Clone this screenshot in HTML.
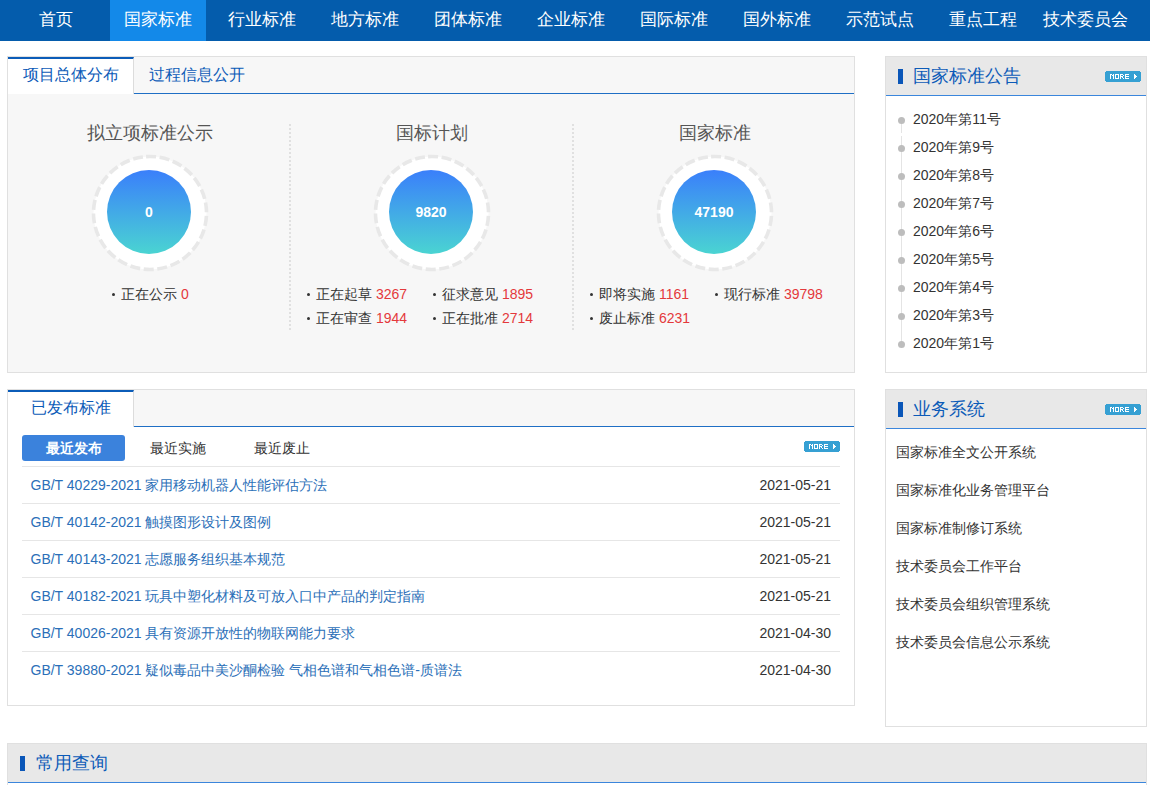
<!DOCTYPE html>
<html><head><meta charset="utf-8">
<style>
*{margin:0;padding:0;box-sizing:border-box}
html,body{width:1150px;height:785px;overflow:hidden;background:#fff;font-family:"Liberation Sans",sans-serif;color:#333}
.abs{position:absolute}
#nav{position:absolute;left:0;top:0;width:1150px;height:41px;background:#045cac}
#nav .it{position:absolute;top:0;height:41px;line-height:39px;width:103px;text-align:center;color:#fff;font-size:16.5px;white-space:nowrap}
#nav .on{background:#1389e9}
.panel{position:absolute;border:1px solid #e0e0e0}
.tabbar{position:absolute;left:0;top:0;right:0;height:37px;background:#f7f7f7;border-bottom:1px solid #1f6fc5}
.tab{position:absolute;top:0;height:37px;font-size:16px;color:#0c5bb8;text-align:center;line-height:36px}
.tab.on{background:#fff;border-top:2px solid #0b5cb8;border-right:1px solid #dcdcdc;height:37px;line-height:32px}
.col{position:absolute;top:66px;width:283px;height:208px}
.vdot{position:absolute;top:67px;width:2px;height:206px;background:repeating-linear-gradient(#e0e0e0 0 2px,transparent 2px 4px)}
.ctitle{position:absolute;top:-2px;left:0;width:100%;text-align:center;font-size:18px;color:#555}
.ring{position:absolute}
.ball{position:absolute;width:84px;height:84px;border-radius:50%;background:linear-gradient(#3a7ffb,#4ad4d2);color:#fff;font-weight:bold;font-size:14px;text-align:center;line-height:84px}
.st{position:absolute;font-size:14px;color:#333;white-space:nowrap;line-height:20px}
.st b{font-weight:normal;color:#e4393c}
.st i{display:inline-block;width:3px;height:3px;border-radius:50%;background:#333;vertical-align:middle;margin:0 6px 0 1px;position:relative;top:-1px}
.hdr{position:absolute;left:0;top:0;right:0;background:#e8e8e8;border-bottom:1px solid #3b86dc}
.mark{position:absolute;width:5px;height:15px;background:#0a56b8}
.htitle{position:absolute;font-size:18px;color:#0c5bb8;white-space:nowrap;line-height:24px}
.more{position:absolute;width:36px;height:11px}
.txt{position:absolute;font-size:14px;white-space:nowrap;line-height:20px}
.sep{position:absolute;left:14px;width:818px;height:1px;background:#e6e6e6}
.lnk{color:#2b6fb8}
.btn{position:absolute;width:103px;height:26px;background:#3b82dc;border-radius:3px;color:#fff;font-weight:bold;font-size:14px;text-align:center;line-height:26px}
.dot{position:absolute;width:7px;height:7px;border-radius:50%;background:#bdbdbd}
.vline{position:absolute;width:1px;background:#e4e4e4}
</style></head><body>
<div id="nav">
<div class="it" style="left:4px">首页</div>
<div class="it on" style="left:110px;width:96px">国家标准</div>
<div class="it" style="left:210px">行业标准</div>
<div class="it" style="left:313px">地方标准</div>
<div class="it" style="left:416px">团体标准</div>
<div class="it" style="left:519px">企业标准</div>
<div class="it" style="left:622px">国际标准</div>
<div class="it" style="left:725px">国外标准</div>
<div class="it" style="left:828px">示范试点</div>
<div class="it" style="left:931px">重点工程</div>
<div class="it" style="left:1034px">技术委员会</div>
</div>

<!-- panel 1 -->
<div class="panel" style="left:7px;top:56px;width:848px;height:317px;background:#f7f7f7">
 <div class="tabbar"></div>
 <div class="tab on" style="left:0;width:126px">项目总体分布</div>
 <div class="tab" style="left:126px;width:126px">过程信息公开</div>

 <div class="col" style="left:0">
  <div class="ctitle">拟立项标准公示</div>
 </div>
 <div class="vdot" style="left:281px"></div><div class="col" style="left:282px">
  <div class="ctitle">国标计划</div>
 </div>
 <div class="vdot" style="left:564px"></div><div class="col" style="left:565px">
  <div class="ctitle">国家标准</div>
 </div>
 <svg class="ring" style="left:81.5px;top:95.5px" width="120" height="120"><circle cx="60" cy="60" r="56.5" fill="#fff" stroke="#e8e8e8" stroke-width="3.6" stroke-dasharray="10 3.65" transform="rotate(-94 60 60)"/></svg><div class="ball" style="left:99px;top:113px">0</div>
 <svg class="ring" style="left:363.5px;top:95.5px" width="120" height="120"><circle cx="60" cy="60" r="56.5" fill="#fff" stroke="#e8e8e8" stroke-width="3.6" stroke-dasharray="10 3.65" transform="rotate(-94 60 60)"/></svg><div class="ball" style="left:381px;top:113px">9820</div>
 <svg class="ring" style="left:646.5px;top:95.5px" width="120" height="120"><circle cx="60" cy="60" r="56.5" fill="#fff" stroke="#e8e8e8" stroke-width="3.6" stroke-dasharray="10 3.65" transform="rotate(-94 60 60)"/></svg><div class="ball" style="left:664px;top:113px">47190</div>
 <div class="st" style="left:103px;top:227px"><i></i>正在公示 <b>0</b></div>
 <div class="st" style="left:298px;top:227px"><i></i>正在起草 <b>3267</b></div>
 <div class="st" style="left:424px;top:227px"><i></i>征求意见 <b>1895</b></div>
 <div class="st" style="left:298px;top:251px"><i></i>正在审查 <b>1944</b></div>
 <div class="st" style="left:424px;top:251px"><i></i>正在批准 <b>2714</b></div>
 <div class="st" style="left:581px;top:227px"><i></i>即将实施 <b>1161</b></div>
 <div class="st" style="left:706px;top:227px"><i></i>现行标准 <b>39798</b></div>
 <div class="st" style="left:581px;top:251px"><i></i>废止标准 <b>6231</b></div>
</div>

<div class="panel" style="left:7px;top:389px;width:848px;height:317px;background:#fff">
 <div class="tabbar"></div>
 <div class="tab on" style="left:0;width:126px">已发布标准</div>
 <div class="btn" style="left:14px;top:45px">最近发布</div>
 <div class="txt" style="left:142px;top:48px">最近实施</div>
 <div class="txt" style="left:246px;top:48px">最近废止</div>
 <div style="position:absolute;left:796px;top:51px"><svg class="more" width="36" height="11" viewBox="0 0 36 11" shape-rendering="crispEdges"><path fill="#36a0d3" d="M1 0h34v1h1v9h-1v1H1v-1H0V1h1z"/><path fill="#fff" d="M5 3h1v1h-1zM6 3h1v1h-1zM8 3h1v1h-1zM5 4h1v1h-1zM7 4h1v1h-1zM8 4h1v1h-1zM5 5h1v1h-1zM8 5h1v1h-1zM5 6h1v1h-1zM8 6h1v1h-1zM5 7h1v1h-1zM8 7h1v1h-1zM10 3h1v1h-1zM11 3h1v1h-1zM12 3h1v1h-1zM13 3h1v1h-1zM10 4h1v1h-1zM13 4h1v1h-1zM10 5h1v1h-1zM13 5h1v1h-1zM10 6h1v1h-1zM13 6h1v1h-1zM10 7h1v1h-1zM11 7h1v1h-1zM12 7h1v1h-1zM13 7h1v1h-1zM15 3h1v1h-1zM16 3h1v1h-1zM17 3h1v1h-1zM15 4h1v1h-1zM18 4h1v1h-1zM15 5h1v1h-1zM16 5h1v1h-1zM17 5h1v1h-1zM15 6h1v1h-1zM17 6h1v1h-1zM15 7h1v1h-1zM18 7h1v1h-1zM20 3h1v1h-1zM21 3h1v1h-1zM22 3h1v1h-1zM23 3h1v1h-1zM20 4h1v1h-1zM20 5h1v1h-1zM21 5h1v1h-1zM22 5h1v1h-1zM23 5h1v1h-1zM20 6h1v1h-1zM20 7h1v1h-1zM21 7h1v1h-1zM22 7h1v1h-1zM23 7h1v1h-1zM29 3h1v1h-1zM29 4h1v1h-1zM30 4h1v1h-1zM29 5h1v1h-1zM30 5h1v1h-1zM31 5h1v1h-1zM29 6h1v1h-1zM30 6h1v1h-1zM29 7h1v1h-1z"/></svg></div>
 <div class="sep" style="top:76px"></div>
 <div class="txt lnk" style="left:22.5px;top:85px">GB/T 40229-2021 家用移动机器人性能评估方法</div>
 <div class="txt" style="right:23px;top:85px">2021-05-21</div>
 <div class="sep" style="top:113px"></div>
 <div class="txt lnk" style="left:22.5px;top:122px">GB/T 40142-2021 触摸图形设计及图例</div>
 <div class="txt" style="right:23px;top:122px">2021-05-21</div>
 <div class="sep" style="top:150px"></div>
 <div class="txt lnk" style="left:22.5px;top:159px">GB/T 40143-2021 志愿服务组织基本规范</div>
 <div class="txt" style="right:23px;top:159px">2021-05-21</div>
 <div class="sep" style="top:187px"></div>
 <div class="txt lnk" style="left:22.5px;top:196px">GB/T 40182-2021 玩具中塑化材料及可放入口中产品的判定指南</div>
 <div class="txt" style="right:23px;top:196px">2021-05-21</div>
 <div class="sep" style="top:224px"></div>
 <div class="txt lnk" style="left:22.5px;top:233px">GB/T 40026-2021 具有资源开放性的物联网能力要求</div>
 <div class="txt" style="right:23px;top:233px">2021-04-30</div>
 <div class="sep" style="top:261px"></div>
 <div class="txt lnk" style="left:22.5px;top:270px">GB/T 39880-2021 疑似毒品中美沙酮检验 气相色谱和气相色谱-质谱法</div>
 <div class="txt" style="right:23px;top:270px">2021-04-30</div>
</div>

<div class="panel" style="left:885px;top:56px;width:262px;height:317px;background:#fff">
 <div class="hdr" style="height:39px"></div>
 <div class="mark" style="left:12px;top:12px"></div>
 <div class="htitle" style="left:27px;top:7px">国家标准公告</div>
 <div style="position:absolute;left:219px;top:14px"><svg class="more" width="36" height="11" viewBox="0 0 36 11" shape-rendering="crispEdges"><path fill="#36a0d3" d="M1 0h34v1h1v9h-1v1H1v-1H0V1h1z"/><path fill="#fff" d="M5 3h1v1h-1zM6 3h1v1h-1zM8 3h1v1h-1zM5 4h1v1h-1zM7 4h1v1h-1zM8 4h1v1h-1zM5 5h1v1h-1zM8 5h1v1h-1zM5 6h1v1h-1zM8 6h1v1h-1zM5 7h1v1h-1zM8 7h1v1h-1zM10 3h1v1h-1zM11 3h1v1h-1zM12 3h1v1h-1zM13 3h1v1h-1zM10 4h1v1h-1zM13 4h1v1h-1zM10 5h1v1h-1zM13 5h1v1h-1zM10 6h1v1h-1zM13 6h1v1h-1zM10 7h1v1h-1zM11 7h1v1h-1zM12 7h1v1h-1zM13 7h1v1h-1zM15 3h1v1h-1zM16 3h1v1h-1zM17 3h1v1h-1zM15 4h1v1h-1zM18 4h1v1h-1zM15 5h1v1h-1zM16 5h1v1h-1zM17 5h1v1h-1zM15 6h1v1h-1zM17 6h1v1h-1zM15 7h1v1h-1zM18 7h1v1h-1zM20 3h1v1h-1zM21 3h1v1h-1zM22 3h1v1h-1zM23 3h1v1h-1zM20 4h1v1h-1zM20 5h1v1h-1zM21 5h1v1h-1zM22 5h1v1h-1zM23 5h1v1h-1zM20 6h1v1h-1zM20 7h1v1h-1zM21 7h1v1h-1zM22 7h1v1h-1zM23 7h1v1h-1zM29 3h1v1h-1zM29 4h1v1h-1zM30 4h1v1h-1zM29 5h1v1h-1zM30 5h1v1h-1zM31 5h1v1h-1zM29 6h1v1h-1zM30 6h1v1h-1zM29 7h1v1h-1z"/></svg></div>
 <div class="vline" style="left:15px;top:64px;height:224px"></div>
 <div style="position:absolute;left:15px;top:76px;width:1px;height:3px;background:#fff"></div>
 <div class="dot" style="left:12px;top:60px"></div><div class="txt" style="left:27px;top:52px">2020年第11号</div>
 <div class="dot" style="left:12px;top:88px"></div><div class="txt" style="left:27px;top:80px">2020年第9号</div>
 <div class="dot" style="left:12px;top:116px"></div><div class="txt" style="left:27px;top:108px">2020年第8号</div>
 <div class="dot" style="left:12px;top:144px"></div><div class="txt" style="left:27px;top:136px">2020年第7号</div>
 <div class="dot" style="left:12px;top:172px"></div><div class="txt" style="left:27px;top:164px">2020年第6号</div>
 <div class="dot" style="left:12px;top:200px"></div><div class="txt" style="left:27px;top:192px">2020年第5号</div>
 <div class="dot" style="left:12px;top:228px"></div><div class="txt" style="left:27px;top:220px">2020年第4号</div>
 <div class="dot" style="left:12px;top:256px"></div><div class="txt" style="left:27px;top:248px">2020年第3号</div>
 <div class="dot" style="left:12px;top:284px"></div><div class="txt" style="left:27px;top:276px">2020年第1号</div>
</div>

<div class="panel" style="left:885px;top:389px;width:262px;height:338px;background:#fff">
 <div class="hdr" style="height:39px"></div>
 <div class="mark" style="left:12px;top:12px"></div>
 <div class="htitle" style="left:27px;top:7px">业务系统</div>
 <div style="position:absolute;left:219px;top:14px"><svg class="more" width="36" height="11" viewBox="0 0 36 11" shape-rendering="crispEdges"><path fill="#36a0d3" d="M1 0h34v1h1v9h-1v1H1v-1H0V1h1z"/><path fill="#fff" d="M5 3h1v1h-1zM6 3h1v1h-1zM8 3h1v1h-1zM5 4h1v1h-1zM7 4h1v1h-1zM8 4h1v1h-1zM5 5h1v1h-1zM8 5h1v1h-1zM5 6h1v1h-1zM8 6h1v1h-1zM5 7h1v1h-1zM8 7h1v1h-1zM10 3h1v1h-1zM11 3h1v1h-1zM12 3h1v1h-1zM13 3h1v1h-1zM10 4h1v1h-1zM13 4h1v1h-1zM10 5h1v1h-1zM13 5h1v1h-1zM10 6h1v1h-1zM13 6h1v1h-1zM10 7h1v1h-1zM11 7h1v1h-1zM12 7h1v1h-1zM13 7h1v1h-1zM15 3h1v1h-1zM16 3h1v1h-1zM17 3h1v1h-1zM15 4h1v1h-1zM18 4h1v1h-1zM15 5h1v1h-1zM16 5h1v1h-1zM17 5h1v1h-1zM15 6h1v1h-1zM17 6h1v1h-1zM15 7h1v1h-1zM18 7h1v1h-1zM20 3h1v1h-1zM21 3h1v1h-1zM22 3h1v1h-1zM23 3h1v1h-1zM20 4h1v1h-1zM20 5h1v1h-1zM21 5h1v1h-1zM22 5h1v1h-1zM23 5h1v1h-1zM20 6h1v1h-1zM20 7h1v1h-1zM21 7h1v1h-1zM22 7h1v1h-1zM23 7h1v1h-1zM29 3h1v1h-1zM29 4h1v1h-1zM30 4h1v1h-1zM29 5h1v1h-1zM30 5h1v1h-1zM31 5h1v1h-1zM29 6h1v1h-1zM30 6h1v1h-1zM29 7h1v1h-1z"/></svg></div>
 <div class="txt" style="left:10px;top:52.0px">国家标准全文公开系统</div>
 <div class="txt" style="left:10px;top:90.0px">国家标准化业务管理平台</div>
 <div class="txt" style="left:10px;top:128.0px">国家标准制修订系统</div>
 <div class="txt" style="left:10px;top:166.0px">技术委员会工作平台</div>
 <div class="txt" style="left:10px;top:204.0px">技术委员会组织管理系统</div>
 <div class="txt" style="left:10px;top:242.0px">技术委员会信息公示系统</div>
</div>

<div class="panel" style="left:7px;top:743px;width:1140px;height:60px;background:#fff">
 <div class="hdr" style="height:39px"></div>
 <div class="mark" style="left:12px;top:12px"></div>
 <div class="htitle" style="left:27.5px;top:6.5px">常用查询</div>
</div>

</body></html>
